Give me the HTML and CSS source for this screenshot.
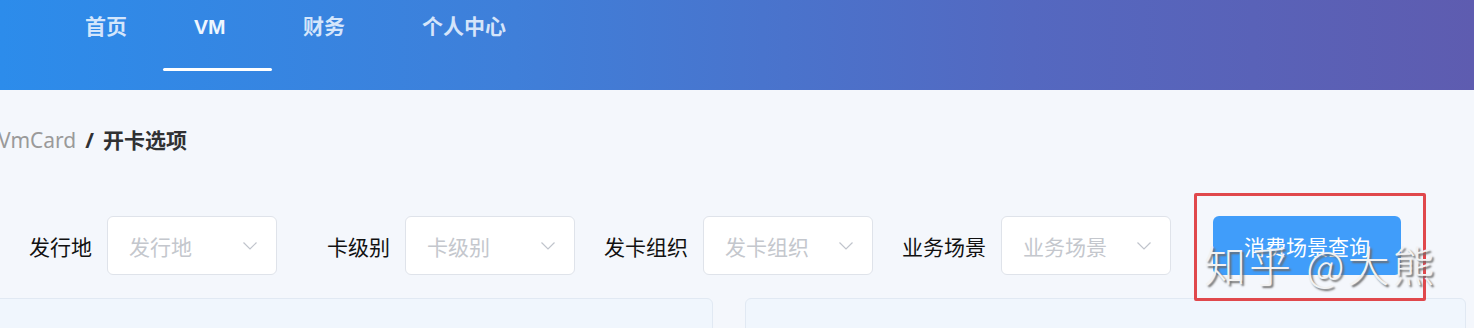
FILE: index.html
```html
<!DOCTYPE html>
<html lang="zh-CN">
<head>
<meta charset="utf-8">
<title>VmCard / 开卡选项</title>
<link rel="stylesheet" href="styles.css">
</head>
<body>
<header class="topbar">
  <nav class="nav">
    <a class="tab">首页</a>
    <a class="tab tab-active">VM</a>
    <a class="tab">财务</a>
    <a class="tab tab-last">个人中心</a>
  </nav>
</header>
<main class="main">
  <div class="breadcrumb">
    <span class="crumb">VmCard</span><span class="sep">/</span><span class="crumb-cur">开卡选项</span>
  </div>
  <form class="filters">
    <div class="item">
      <label class="label">发行地</label>
      <div class="select"><span class="ph">发行地</span><svg class="chev" width="14" height="8" viewBox="0 0 14 8"><polyline points="0.5,0.5 7,7 13.5,0.5" fill="none" stroke="#c0c4cc" stroke-width="1.2"/></svg></div>
    </div>
    <div class="item">
      <label class="label">卡级别</label>
      <div class="select"><span class="ph">卡级别</span><svg class="chev" width="14" height="8" viewBox="0 0 14 8"><polyline points="0.5,0.5 7,7 13.5,0.5" fill="none" stroke="#c0c4cc" stroke-width="1.2"/></svg></div>
    </div>
    <div class="item">
      <label class="label">发卡组织</label>
      <div class="select"><span class="ph">发卡组织</span><svg class="chev" width="14" height="8" viewBox="0 0 14 8"><polyline points="0.5,0.5 7,7 13.5,0.5" fill="none" stroke="#c0c4cc" stroke-width="1.2"/></svg></div>
    </div>
    <div class="item item-last">
      <label class="label">业务场景</label>
      <div class="select"><span class="ph">业务场景</span><svg class="chev" width="14" height="8" viewBox="0 0 14 8"><polyline points="0.5,0.5 7,7 13.5,0.5" fill="none" stroke="#c0c4cc" stroke-width="1.2"/></svg></div>
    </div>
    <div class="btn-wrap">
      <button type="button" class="btn">消费场景查询</button>
      <span class="watermark">知乎 @大熊</span>
    </div>
  </form>
  <section class="cards">
    <div class="card"></div>
    <div class="card"></div>
  </section>
</main>
</body>
</html>
```

FILE: styles.css
```css
* { box-sizing: border-box; }
html, body { margin: 0; padding: 0; }
body {
  background: #f4f7fc;
  font-family: "Noto Sans", "Noto Sans CJK SC", sans-serif;
  overflow: hidden;
  width: 1474px;
  height: 328px;
}
.topbar {
  height: 90px;
  background: linear-gradient(90deg, #2c8ceb 0%, #3f7fd9 35%, #5468c0 70%, #5e5cb0 100%);
}
.nav {
  display: flex;
  height: 90px;
  padding-left: 54px;
}
.tab {
  display: flex;
  flex-direction: column;
  width: 109px;
  height: 90px;
  padding: 12px 0 19px 31px;
  font-size: 21px;
  line-height: 30px;
  font-weight: 700;
  color: rgba(235, 244, 255, 0.88);
  font-family: "Liberation Sans", "Noto Sans CJK SC", sans-serif;
}
.tab-active { color: #eef6ff; }
.tab-active::after {
  content: "";
  margin-top: auto;
  margin-left: -31px;
  width: 109px;
  height: 3px;
  border-radius: 2px;
  background: #fff;
}
.tab-last { width: auto; margin-left: 10px; }
.main {
  margin-left: -8px;
  width: 1474px;
}
.breadcrumb {
  margin-top: 35px;
  padding-left: 6px;
  height: 30px;
  line-height: 30px;
  font-size: 21px;
  display: flex;
}
.crumb { color: #9a9a9a; }
.sep { margin: 0 9px; font-weight: 700; color: #303133; }
.crumb-cur { font-weight: 700; color: #303133; }
.filters {
  margin: 61px 0 0;
  padding-left: 16px;
  display: flex;
  align-items: center;
  height: 59px;
}
.item {
  display: flex;
  align-items: center;
  margin-right: 29px;
}
.item-last { margin-right: 42px; }
.label {
  width: 84px;
  margin-right: 15px;
  text-align: right;
  font-size: 21px;
  color: #111;
  font-family: "Noto Sans CJK SC", sans-serif;
}
.select {
  width: 170px;
  height: 59px;
  border: 1px solid #dfe3ea;
  border-radius: 6px;
  background: #fff;
  display: flex;
  align-items: center;
  justify-content: space-between;
  padding: 0 19px 0 21px;
}
.ph {
  font-size: 21px;
  color: #c4c7cd;
  font-family: "Noto Sans CJK SC", sans-serif;
}
.chev { display: block; }
.btn-wrap { position: relative; }
.btn-wrap::after {
  content: "";
  position: absolute;
  left: -19px;
  top: -23px;
  width: 226px;
  height: 102px;
  border: 3px solid #e0484c;
  border-radius: 2px;
  pointer-events: none;
}
.btn {
  display: block;
  width: 188px;
  height: 59px;
  border: none;
  border-radius: 6px;
  background: #409dfa;
  color: #fff;
  font-size: 21px;
  font-family: "Noto Sans CJK SC", sans-serif;
  padding: 0;
}
.watermark {
  position: absolute;
  left: -9px;
  top: 20px;
  white-space: nowrap;
  font-size: 42px;
  line-height: 56px;
  letter-spacing: 3px;
  font-weight: 300;
  color: #f2f2f2;
  font-family: "Noto Sans CJK SC", sans-serif;
  text-shadow: 2px 2px 2px #6b6b6b;
  z-index: 2;
}
.cards {
  margin-top: 23px;
  display: grid;
  grid-template-columns: 721px 721px;
  gap: 32px;
}
.card {
  height: 200px;
  background: #f0f6fd;
  border: 1px solid #e1e9f3;
  border-radius: 6px;
}
```
